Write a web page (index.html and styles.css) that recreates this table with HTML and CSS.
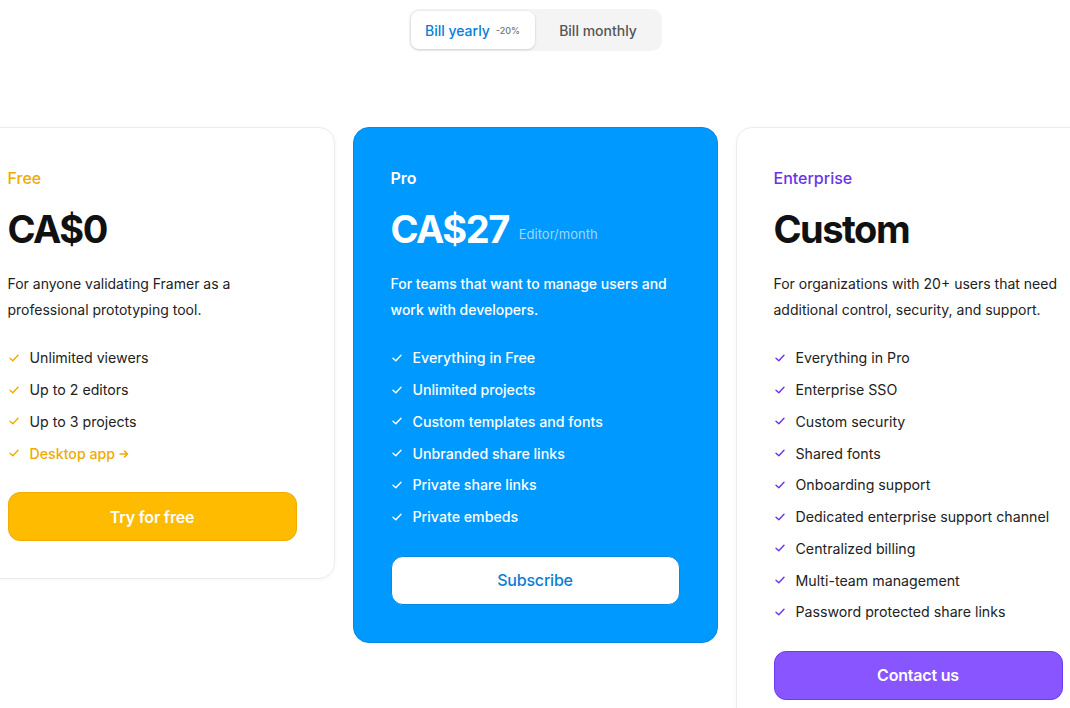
FILE: index.html
```html
<!DOCTYPE html>
<html lang="en">
<head>
<meta charset="utf-8">
<title>Pricing</title>
<link rel="stylesheet" href="styles.css">
</head>
<body>
<div class="page">
  <div class="toggle-wrap">
    <div class="toggle">
      <button class="seg active">Bill yearly <span class="off">-20%</span></button>
      <button class="seg">Bill monthly</button>
    </div>
  </div>

  <div class="cards">
    <section class="card free">
      <div class="tier">Free</div>
      <div class="price-row"><span class="price">CA$0</span></div>
      <p class="desc">For anyone validating Framer as a professional prototyping tool.</p>
      <ul class="features">
        <li><svg class="chk" viewBox="0 0 10 8"><path d="M1 4.2 3.8 6.8 9 1.2"/></svg>Unlimited viewers</li>
        <li><svg class="chk" viewBox="0 0 10 8"><path d="M1 4.2 3.8 6.8 9 1.2"/></svg>Up to 2 editors</li>
        <li><svg class="chk" viewBox="0 0 10 8"><path d="M1 4.2 3.8 6.8 9 1.2"/></svg>Up to 3 projects</li>
        <li class="link"><svg class="chk" viewBox="0 0 10 8"><path d="M1 4.2 3.8 6.8 9 1.2"/></svg>Desktop app <svg class="arrow" viewBox="0 0 10 10"><path d="M1 5h7.5M5.5 2 8.5 5 5.5 8"/></svg></li>
      </ul>
      <button class="btn">Try for free</button>
    </section>

    <section class="card pro">
      <div class="tier">Pro</div>
      <div class="price-row"><span class="price">CA$27</span><span class="unit">Editor/month</span></div>
      <p class="desc">For teams that want to manage users and work with developers.</p>
      <ul class="features">
        <li><svg class="chk" viewBox="0 0 10 8"><path d="M1 4.2 3.8 6.8 9 1.2"/></svg>Everything in Free</li>
        <li><svg class="chk" viewBox="0 0 10 8"><path d="M1 4.2 3.8 6.8 9 1.2"/></svg>Unlimited projects</li>
        <li><svg class="chk" viewBox="0 0 10 8"><path d="M1 4.2 3.8 6.8 9 1.2"/></svg>Custom templates and fonts</li>
        <li><svg class="chk" viewBox="0 0 10 8"><path d="M1 4.2 3.8 6.8 9 1.2"/></svg>Unbranded share links</li>
        <li><svg class="chk" viewBox="0 0 10 8"><path d="M1 4.2 3.8 6.8 9 1.2"/></svg>Private share links</li>
        <li><svg class="chk" viewBox="0 0 10 8"><path d="M1 4.2 3.8 6.8 9 1.2"/></svg>Private embeds</li>
      </ul>
      <button class="btn">Subscribe</button>
    </section>

    <section class="card ent">
      <div class="tier">Enterprise</div>
      <div class="price-row"><span class="price">Custom</span></div>
      <p class="desc">For organizations with 20+ users that need additional control, security, and support.</p>
      <ul class="features">
        <li><svg class="chk" viewBox="0 0 10 8"><path d="M1 4.2 3.8 6.8 9 1.2"/></svg>Everything in Pro</li>
        <li><svg class="chk" viewBox="0 0 10 8"><path d="M1 4.2 3.8 6.8 9 1.2"/></svg>Enterprise SSO</li>
        <li><svg class="chk" viewBox="0 0 10 8"><path d="M1 4.2 3.8 6.8 9 1.2"/></svg>Custom security</li>
        <li><svg class="chk" viewBox="0 0 10 8"><path d="M1 4.2 3.8 6.8 9 1.2"/></svg>Shared fonts</li>
        <li><svg class="chk" viewBox="0 0 10 8"><path d="M1 4.2 3.8 6.8 9 1.2"/></svg>Onboarding support</li>
        <li><svg class="chk" viewBox="0 0 10 8"><path d="M1 4.2 3.8 6.8 9 1.2"/></svg>Dedicated enterprise support channel</li>
        <li><svg class="chk" viewBox="0 0 10 8"><path d="M1 4.2 3.8 6.8 9 1.2"/></svg>Centralized billing</li>
        <li><svg class="chk" viewBox="0 0 10 8"><path d="M1 4.2 3.8 6.8 9 1.2"/></svg>Multi-team management</li>
        <li><svg class="chk" viewBox="0 0 10 8"><path d="M1 4.2 3.8 6.8 9 1.2"/></svg>Password protected share links</li>
      </ul>
      <button class="btn">Contact us</button>
    </section>
  </div>
</div>
</body>
</html>
```
FILE: styles.css
```css
* { box-sizing: border-box; }
html, body {
  margin: 0;
  padding: 0;
  background: #fff;
  overflow: hidden;
  height: 708px;
}
body {
  font-family: Inter, "Noto Sans", sans-serif;
  color: #1c1c1c;
  -webkit-font-smoothing: antialiased;
}
.page {
  width: 1070px;
  display: flex;
  flex-direction: column;
  align-items: center;
  padding-top: 9px;
}
.toggle-wrap {
  display: flex;
  justify-content: center;
  width: 100%;
}
.toggle {
  display: flex;
  width: 253px;
  height: 42px;
  padding: 2px;
  background: #f4f4f4;
  border-radius: 10px;
  gap: 2px;
}
.seg {
  flex: 1;
  border: 0;
  background: transparent;
  font-family: inherit;
  font-size: 14px;
  font-weight: 500;
  color: #555;
  border-radius: 8px;
  display: flex;
  align-items: center;
  justify-content: center;
  gap: 6px;
  padding: 0;
}
.seg.active {
  flex: 0 0 124px;
  background: #fff;
  color: #0a7ed6;
  font-weight: 500;
  box-shadow: 0 1px 3px rgba(0,0,0,0.12), 0 0 0 1px rgba(0,0,0,0.02);
}
.seg .off {
  font-size: 9px;
  color: #777;
  font-weight: 500;
}
.cards {
  margin-top: 76px;
  display: flex;
  justify-content: center;
  gap: 18px;
  width: 1070px;
  align-items: flex-start;
}
.card {
  flex: 0 0 365px;
  width: 365px;
  padding: 37px;
  border-radius: 16px;
  background: #fff;
  border: 1px solid #ececec;
  box-shadow: 0 1px 4px rgba(0,0,0,0.04);
}
.tier {
  font-size: 16px;
  line-height: 26px;
  font-weight: 500;
}
.price-row {
  display: flex;
  align-items: baseline;
  margin-top: 15px;
  height: 46px;
}
.price {
  font-size: 38px;
  line-height: 46px;
  font-weight: 700;
  letter-spacing: -1.5px;
  color: #111;
}
.unit {
  font-size: 13px;
  margin-left: 10px;
  color: rgba(255,255,255,0.62);
  position: relative;
  top: -4px;
}
.desc {
  margin: 19px 0 0;
  font-size: 14px;
  line-height: 26px;
  color: #222;
}
.features {
  list-style: none;
  padding: 0;
  margin: 19px 0 0;
}
.features li {
  display: flex;
  align-items: center;
  height: 31.75px;
  font-size: 14.2px;
  color: #222;
}
.chk {
  width: 10px;
  height: 8px;
  margin: 0 11px 0 1px;
  flex: 0 0 auto;
  fill: none;
  stroke-width: 1.4;
  stroke-linecap: round;
  stroke-linejoin: round;
}
.arrow {
  width: 10px;
  height: 10px;
  margin-left: 4px;
  margin-top: 2px;
  fill: none;
  stroke: currentColor;
  stroke-width: 1.5;
  stroke-linecap: round;
  stroke-linejoin: round;
}
.btn {
  display: block;
  width: 289px;
  height: 49px;
  margin-top: 23px;
  border-radius: 12px;
  font-family: inherit;
  font-size: 16px;
  font-weight: 600;
  letter-spacing: -0.2px;
  cursor: pointer;
}

/* Free */
.free .tier { color: #f0aa00; }
.free .chk { stroke: #f0aa00; }
.free .link { color: #f0aa00; font-weight: 500; }
.free .btn {
  background: #ffbb00;
  border: 1px solid #f2ad00;
  color: #fff;
}

/* Pro */
.pro {
  background: #0099ff;
  border-color: #0a88e0;
  color: #fff;
}
.pro .tier, .pro .price, .pro .desc, .pro .features li { color: #fff; }
.pro .tier { font-weight: 600; }
.pro .desc, .pro .features li { font-weight: 500; }
.pro .chk { stroke: #fff; }
.pro .btn {
  background: #fff;
  border: 1px solid #0a88e0;
  color: #0a7ed6;
  font-weight: 500;
}

/* Enterprise */
.ent .tier { color: #6a34e6; }
.ent .chk { stroke: #6a34e6; }
.ent .btn {
  background: #8855ff;
  border: 1px solid #6d3cf0;
  color: #fff;
}
```
